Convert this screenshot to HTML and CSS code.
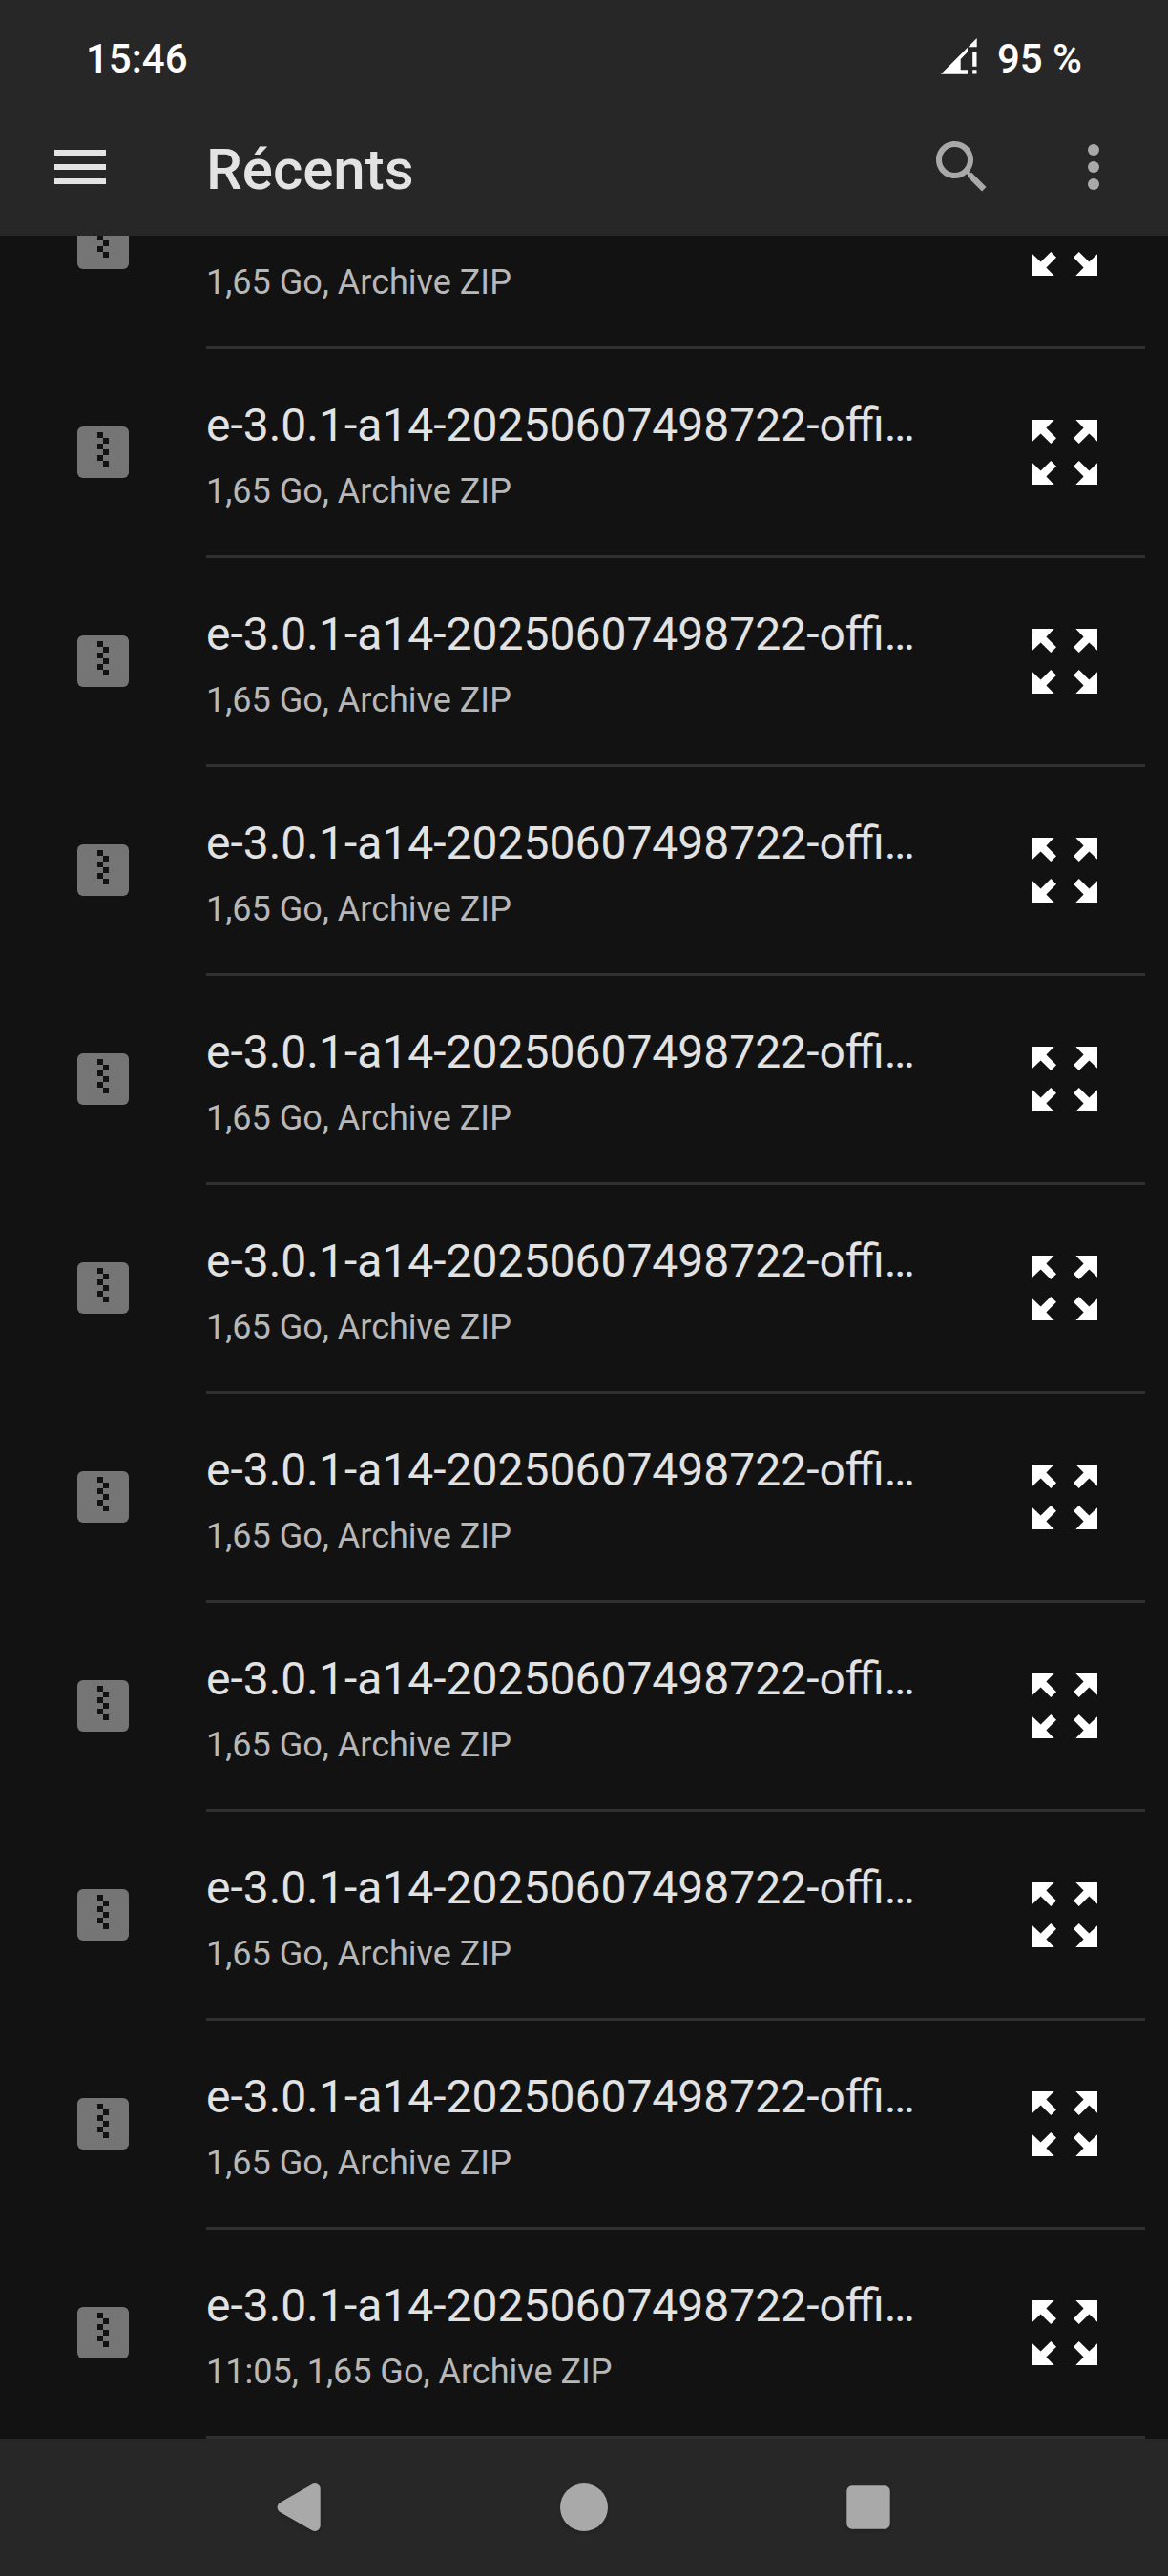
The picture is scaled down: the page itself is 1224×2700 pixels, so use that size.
FILE: index.html
```html
<!DOCTYPE html>
<html lang="fr">
<head>
<meta charset="utf-8">
<title>Récents</title>
<link rel="stylesheet" href="styles.css">
</head>
<body>
<svg width="0" height="0" class="defs" aria-hidden="true">
  <symbol id="zip" viewBox="0 0 54 54">
    <rect width="54" height="54" rx="6" fill="#757575"/>
    <path fill="#121212" d="M21 6h6v6h-6zM27 12h6v6h-6zM21 18h6v6h-6zM27 24h6v6h-6zM21 30h6v6h-6zM27 36h6v6h-6z"/>
  </symbol>
  <symbol id="expand" viewBox="0 0 68 68">
    <g fill="#fff">
      <path id="arrow" d="M0 0H22.7L14.4 8.6 25 19.3 19.3 25 8.6 14.4 0 22.7z"/>
      <use href="#arrow" transform="matrix(-1 0 0 1 68 0)"/>
      <use href="#arrow" transform="matrix(1 0 0 -1 0 68)"/>
      <use href="#arrow" transform="matrix(-1 0 0 -1 68 68)"/>
    </g>
  </symbol>
</svg>
<div class="screen">
  <header class="status">
    <span class="clock">15:46</span>
    <svg class="signal" width="38" height="38" viewBox="0 0 38 38" fill="#fff"><path d="M0 37.700L37.700 0V9.300H28V14.500L20.700 22V33.300H28V37.700zM33.200 14.800H37.500V29.700H33.200zM33.200 33.300H37.500V37.500H33.200z"/></svg>
    <span class="battery">95&nbsp;%</span>
  </header>
  <div class="toolbar">
    <svg width="72" height="72" viewBox="0 0 24 24" fill="#e3e3e3"><path d="M3 18h18v-2H3v2zm0-5h18v-2H3v2zm0-7v2h18V6H3z"/></svg>
    <h1>Récents</h1>
    <svg class="search" width="72" height="72" viewBox="0 0 24 24" fill="#a9a9a9"><path d="M15.500 14h-.79l-.28-.27C15.410 12.590 16 11.110 16 9.500 16 5.910 13.090 3 9.500 3S3 5.910 3 9.500 5.910 16 9.500 16c1.610 0 3.090-.59 4.230-1.570l.27.28v.79l5 4.990L20.490 19l-4.990-5zm-6 0C7.010 14 5 11.990 5 9.500S7.010 5 9.500 5 14 7.010 14 9.500 11.990 14 9.500 14z"/></svg>
    <svg width="72" height="72" viewBox="0 0 24 24" fill="#a9a9a9"><circle cx="12" cy="6" r="2"/><circle cx="12" cy="12" r="2"/><circle cx="12" cy="18" r="2"/></svg>
  </div>
  <main class="list">
    <div class="row"><svg class="zip"><use href="#zip"/></svg><div class="text"><div class="name"></div><div class="meta">1,65 Go, Archive ZIP</div></div><svg class="expand"><use href="#expand"/></svg></div>
    <div class="row"><svg class="zip"><use href="#zip"/></svg><div class="text"><div class="name">e-3.0.1-a14-20250607498722-offi…</div><div class="meta">1,65 Go, Archive ZIP</div></div><svg class="expand"><use href="#expand"/></svg></div>
    <div class="row"><svg class="zip"><use href="#zip"/></svg><div class="text"><div class="name">e-3.0.1-a14-20250607498722-offi…</div><div class="meta">1,65 Go, Archive ZIP</div></div><svg class="expand"><use href="#expand"/></svg></div>
    <div class="row"><svg class="zip"><use href="#zip"/></svg><div class="text"><div class="name">e-3.0.1-a14-20250607498722-offi…</div><div class="meta">1,65 Go, Archive ZIP</div></div><svg class="expand"><use href="#expand"/></svg></div>
    <div class="row"><svg class="zip"><use href="#zip"/></svg><div class="text"><div class="name">e-3.0.1-a14-20250607498722-offi…</div><div class="meta">1,65 Go, Archive ZIP</div></div><svg class="expand"><use href="#expand"/></svg></div>
    <div class="row"><svg class="zip"><use href="#zip"/></svg><div class="text"><div class="name">e-3.0.1-a14-20250607498722-offi…</div><div class="meta">1,65 Go, Archive ZIP</div></div><svg class="expand"><use href="#expand"/></svg></div>
    <div class="row"><svg class="zip"><use href="#zip"/></svg><div class="text"><div class="name">e-3.0.1-a14-20250607498722-offi…</div><div class="meta">1,65 Go, Archive ZIP</div></div><svg class="expand"><use href="#expand"/></svg></div>
    <div class="row"><svg class="zip"><use href="#zip"/></svg><div class="text"><div class="name">e-3.0.1-a14-20250607498722-offi…</div><div class="meta">1,65 Go, Archive ZIP</div></div><svg class="expand"><use href="#expand"/></svg></div>
    <div class="row"><svg class="zip"><use href="#zip"/></svg><div class="text"><div class="name">e-3.0.1-a14-20250607498722-offi…</div><div class="meta">1,65 Go, Archive ZIP</div></div><svg class="expand"><use href="#expand"/></svg></div>
    <div class="row"><svg class="zip"><use href="#zip"/></svg><div class="text"><div class="name">e-3.0.1-a14-20250607498722-offi…</div><div class="meta">1,65 Go, Archive ZIP</div></div><svg class="expand"><use href="#expand"/></svg></div>
    <div class="row"><svg class="zip"><use href="#zip"/></svg><div class="text"><div class="name">e-3.0.1-a14-20250607498722-offi…</div><div class="meta">11:05, 1,65 Go, Archive ZIP</div></div><svg class="expand"><use href="#expand"/></svg></div>
  </main>
  <nav class="navbar">
    <svg width="60" height="60" viewBox="0 0 60 60"><path d="M12.300 30L46 10.700V49.300z" fill="#a9a9a9" stroke="#a9a9a9" stroke-width="11.400" stroke-linejoin="round"/></svg>
    <svg width="60" height="60" viewBox="0 0 60 60"><circle cx="30" cy="30" r="25" fill="#a9a9a9"/></svg>
    <svg width="60" height="60" viewBox="0 0 60 60"><rect x="7.300" y="7.300" width="45.400" height="45.400" rx="5.500" fill="#a9a9a9"/></svg>
  </nav>
</div>
</body>
</html>
```
FILE: styles.css
```css
* { box-sizing: border-box; }
body {
  margin: 0;
  background: #121212;
  font-family: Roboto, "Liberation Sans", sans-serif;
}
svg { display: block; flex: none; }
.defs { position: absolute; }
.screen {
  width: 1224px;
  height: 2700px;
  display: flex;
  flex-direction: column;
  overflow: hidden;
}
.status {
  flex: none;
  height: 103px;
  padding: 37px 90px 0 90px;
  display: flex;
  align-items: flex-start;
  background: #272727;
  color: #fff;
  font-size: 42px;
  font-weight: 500;
  line-height: 49px;
}
.signal { margin: 3px 22px 0 auto; }
.battery {
  width: 88px;
  display: flex;
  justify-content: flex-end;
  white-space: nowrap;
}
.toolbar {
  flex: none;
  height: 144px;
  padding: 0 42px 0 48px;
  display: flex;
  align-items: center;
  background: #272727;
}
h1 {
  margin: 5px 0 0 96px;
  color: #e3e3e3;
  font-size: 60px;
  font-weight: 500;
  line-height: 71px;
}
.search { margin: 0 66px 0 auto; }
.list {
  flex: none;
  height: 2309px;
  display: flex;
  flex-direction: column;
  justify-content: flex-end;
  overflow: hidden;
}
.row {
  flex: none;
  height: 219px;
  padding-left: 81px;
  display: flex;
  align-items: center;
}
.zip { width: 54px; height: 54px; margin: -3px 81px 0 0; }
.text {
  width: 984px;
  height: 219px;
  padding-top: 51px;
  border-bottom: 3px solid #303030;
  white-space: nowrap;
}
.name { height: 57px; color: #e2e2e2; font-size: 48px; line-height: 57px; }
.meta { margin-top: 20px; height: 42px; color: #b8b8b8; font-size: 36px; line-height: 42px; }
.expand { width: 68px; height: 68px; margin: -3px 0 0 -118px; }
.navbar {
  flex: none;
  height: 144px;
  padding: 0 284px;
  display: flex;
  align-items: center;
  justify-content: space-between;
  background: #272727;
}
.navbar svg { filter: drop-shadow(0 2px 2px rgba(0, 0, 0, .15)); }
```
